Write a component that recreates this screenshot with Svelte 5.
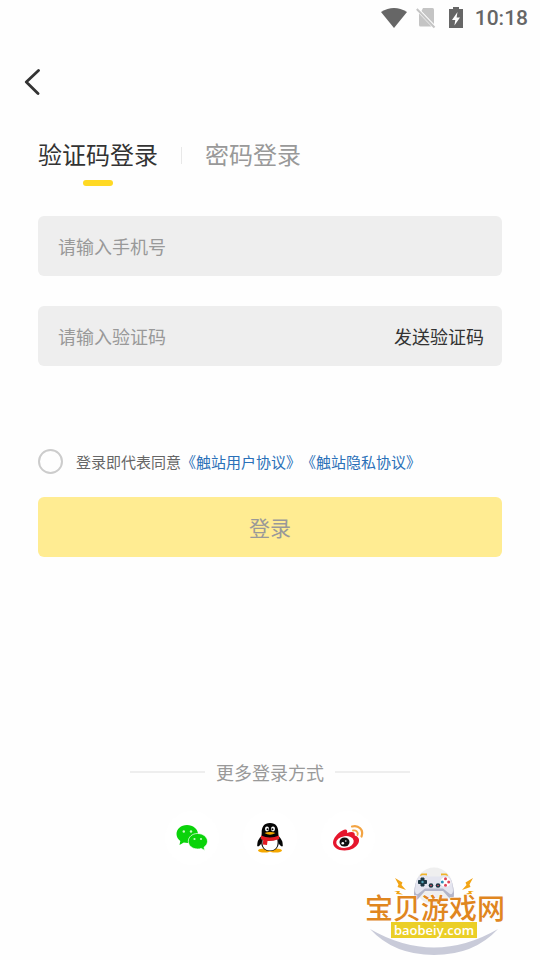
<script>
  let mode = $state('code');
  let phone = $state('');
  let secret = $state('');
  let agreed = $state(false);

  const tabs = [
    { id: 'code', label: '验证码登录' },
    { id: 'password', label: '密码登录' }
  ];

  const submit = (event) => {
    event.preventDefault();
  };
</script>

<div class="page">
  <header class="status">
    <svg width="26" height="22" viewBox="0 0 26 22" aria-hidden="true">
      <path d="M0 5Q13-3 26 5L13 21Z" fill="#666" />
    </svg>
    <svg width="20" height="22" viewBox="0 0 20 22" aria-hidden="true">
      <path d="M7 1H16.500Q18 1 18 2.500V17L5.500 4Z" fill="#c4c4c4" />
      <path d="M3 6.500L15.500 19.500H4.500Q3 19.500 3 18Z" fill="#c4c4c4" />
      <path d="M0.800 2L18.500 20.500" stroke="#c4c4c4" stroke-width="2" />
    </svg>
    <svg width="14" height="22" viewBox="0 0 14 22" aria-hidden="true">
      <path d="M4 0H10V2H14V21H0V2H4Z" fill="#666" />
      <path d="M8.500 5L3 13H6.300L5.400 18.500L11 10.500H7.600Z" fill="#fff" />
    </svg>
    <span class="time">10:18</span>
  </header>

  <nav class="topbar">
    <button class="back" type="button" aria-label="返回">
      <svg width="18" height="28" viewBox="0 0 18 28" aria-hidden="true">
        <path d="M14.500 3.500L2.300 15L14 26.500" fill="none" stroke="#333" stroke-width="2.800" stroke-linecap="round" stroke-linejoin="round" />
      </svg>
    </button>
  </nav>

  <main>
    <div class="tabs">
      {#each tabs as tab}
        <button
          type="button"
          class="tab"
          class:active={mode === tab.id}
          onclick={() => (mode = tab.id)}
        >
          {tab.label}
        </button>
      {/each}
    </div>

    <form onsubmit={submit}>
      <div class="field">
        <input type="tel" bind:value={phone} placeholder="请输入手机号" aria-label="手机号" />
      </div>
      <div class="field">
        {#if mode === 'code'}
          <input type="text" bind:value={secret} placeholder="请输入验证码" aria-label="验证码" />
          <button type="button" class="send">发送验证码</button>
        {:else}
          <input type="password" bind:value={secret} placeholder="请输入密码" aria-label="密码" />
        {/if}
      </div>

      <div class="agreement">
        <input id="agree" type="checkbox" bind:checked={agreed} />
        <p>
          <label for="agree">登录即代表同意</label><a href="#terms">《触站用户协议》</a><a href="#privacy">《触站隐私协议》</a>
        </p>
      </div>

      <button type="submit" class="login">登录</button>
    </form>
  </main>

  <section class="more">
    <h2>更多登录方式</h2>
    <div class="socials">
      <button type="button" aria-label="微信登录">
        <svg width="34" height="34" viewBox="0 0 34 34" aria-hidden="true">
          <path d="M12 4C5.800 4 1.500 8 1.500 13C1.500 16 3 18.300 5.300 20L4.500 24L8.800 21.600Q10.500 22 13 22C18.500 21.500 23 17.500 23 13C23 8 18 4 12 4Z" fill="#0ad30a" />
          <path d="M22.500 12.500C17.200 12.500 13.300 16 13.300 20.300C13.300 24.800 17.500 28 22.500 28Q24.500 28 26.200 27.400L29.800 29.500L29 26.200C31.200 24.800 32.500 22.800 32.500 20.300C32.500 16 28 12.500 22.500 12.500Z" fill="#0ad30a" stroke="#fff" stroke-width="0.700" />
          <g fill="#c9f7c4">
            <circle cx="8.800" cy="10.500" r="1.200" />
            <circle cx="16" cy="10.500" r="1.200" />
            <circle cx="19.500" cy="18" r="1.100" />
            <circle cx="26" cy="18" r="1.100" />
          </g>
        </svg>
      </button>
      <button type="button" aria-label="QQ登录">
        <svg width="34" height="34" viewBox="0 0 34 34" aria-hidden="true">
          <ellipse cx="11.500" cy="29.500" rx="6.500" ry="2" fill="#f5a800" />
          <ellipse cx="22.500" cy="29.500" rx="6.500" ry="2" fill="#f5a800" />
          <path d="M8.500 15Q4 19 4.200 25Q5.500 26.500 8 23Z" fill="#050505" />
          <path d="M25.500 15Q30 19 29.800 25Q28.500 26.500 26 23Z" fill="#050505" />
          <path d="M17 2C11 2 8.500 6 8.700 12L8 20C8 27 12 30 17 30S26 27 26 20L25.300 12C25.500 6 23 2 17 2Z" fill="#050505" />
          <path d="M9.800 18Q17 21 24.300 18Q26 29.300 17 29.500Q8 29.300 9.800 18Z" fill="#fff" />
          <ellipse cx="14" cy="8" rx="2" ry="2.400" fill="#fff" />
          <ellipse cx="20" cy="8" rx="2" ry="2.400" fill="#fff" />
          <circle cx="14.500" cy="8.200" r="1" fill="#050505" />
          <circle cx="19.500" cy="8.200" r="1" fill="#050505" />
          <path d="M11.500 12Q17 10 22.500 12Q17 15.500 11.500 12Z" fill="#f5a800" />
          <path d="M8 14.500Q17 18.500 26 14.500L26.300 18Q20 20.500 14.500 20L14 24L9.800 23.500L10.200 19L7.800 18Z" fill="#e31b23" />
        </svg>
      </button>
      <button type="button" aria-label="微博登录">
        <svg width="34" height="34" viewBox="0 0 34 34" aria-hidden="true">
          <path d="M11.500 9.500C15 7.500 17 9 16 12C20 10.300 24.500 10.300 23.800 14.500C27.500 15.500 29 18.500 27.500 22C25.500 26.500 20 29.500 13.500 29.500C6.500 29.500 2 26 2 21.500C2 17.500 6.500 12 11.500 9.500Z" fill="#e6162d" />
          <ellipse cx="14" cy="21" rx="8.800" ry="5.800" fill="#fff" transform="rotate(-8 14 21)" />
          <ellipse cx="13.500" cy="21" rx="5" ry="4.600" fill="#111" />
          <circle cx="11.800" cy="22.300" r="1.300" fill="#fff" />
          <circle cx="14.800" cy="20" r="0.800" fill="#fff" />
          <path d="M21 5.500C27.500 3.500 33 9 30.500 15.500" fill="none" stroke="#f3a443" stroke-width="2.200" stroke-linecap="round" />
          <path d="M22 9.500C25 8.800 27.500 11 26.500 14" fill="none" stroke="#f3a443" stroke-width="1.800" stroke-linecap="round" />
        </svg>
      </button>
    </div>
  </section>

  <footer>
    <svg width="145" height="95" viewBox="10 5 145 95" role="img" aria-label="宝贝游戏网 baobeiy.com">
      <circle cx="79" cy="26" r="18.500" fill="#efefef" />
      <path d="M15 69Q79 106 143 69Q119 95 79 95Q39 95 15 69Z" fill="#c9cbd9" />
      <path d="M65.500 16L67 14.500H72M86 14.500H91L92.500 16" fill="none" stroke="#f0b429" stroke-width="2" />
      <path d="M64 17Q69 14.500 73 17H85Q89 14.500 94 17Q98 21 99 33Q99 43 95 39L88 31H70L63 39Q59 43 59 33Q60 21 64 17Z" fill="#b3b5c9" />
      <path d="M64 16.500Q69 14 73 16.500H85Q89 14 94 16.500Q97.500 20 98 30Q98 35 95 34L88 28.500H70L63 34Q60 35 60 30Q60.500 20 64 16.500Z" fill="#e4e5ef" />
      <path d="M66 18H69V20.500H71.500V23.500H69V26H66V23.500H63.500V20.500H66Z" fill="#1d3844" stroke="#1d3844" stroke-width="1" stroke-linejoin="round" />
      <circle cx="67.500" cy="22" r="1.200" fill="#54a7bd" />
      <circle cx="76" cy="25.500" r="2.300" fill="#1d3844" />
      <circle cx="83" cy="25.500" r="2.300" fill="#1d3844" />
      <circle cx="76" cy="25.500" r="0.800" fill="#e0455a" />
      <circle cx="83" cy="25.500" r="0.800" fill="#e0455a" />
      <circle cx="90.500" cy="22" r="5" fill="#fff" />
      <circle cx="90.500" cy="18.800" r="1.500" fill="#e0455a" />
      <circle cx="90.500" cy="25.200" r="1.500" fill="#e0455a" />
      <circle cx="87.300" cy="22" r="1.500" fill="#2f8fb5" />
      <circle cx="93.700" cy="22" r="1.500" fill="#e0455a" />
      <g fill="#f2a516">
        <path d="M40 18L47.500 22.500L46.500 25L51 30L42.500 27L43.500 24.500Z" />
        <path d="M39 31L45 31L44 32.500L48 34.500L41 34L42 32Z" />
        <path d="M118 18L110.500 22.500L111.500 25L107 30L115.500 27L114.500 24.500Z" />
        <path d="M119 31L113 31L114 32.500L110 34.500L117 34L116 32Z" />
      </g>
      <text class="site" x="80" y="59">宝贝游戏网</text>
      <rect x="36" y="62" width="86" height="16" fill="#ebcf27" />
      <text class="domain" x="79" y="75">baobeiy.com</text>
    </svg>
  </footer>
</div>

<style>
  :global(body) {
    margin: 0;
    background: #fefefe;
  }

  .page {
    display: flex;
    flex-direction: column;
    min-height: 100vh;
    box-sizing: border-box;
    color: #333;
    font-family: "Noto Sans CJK SC", sans-serif;
    text-spacing-trim: space-all;
  }

  button,
  input {
    margin: 0;
    padding: 0;
    border: 0;
    background: none;
    color: inherit;
    font: inherit;
  }

  button {
    cursor: pointer;
  }

  svg {
    display: block;
  }

  .status {
    display: flex;
    align-items: center;
    justify-content: flex-end;
    height: 35px;
    padding-right: 12px;
  }

  .status svg:nth-child(2) {
    margin: 0 13px 0 9px;
  }

  .time {
    margin-left: 12px;
    color: #666;
    font: 500 21px/24px Roboto, sans-serif;
  }

  .topbar {
    padding: 32px 24px;
  }

  main {
    padding: 0 38px;
  }

  .tabs {
    display: flex;
    height: 54px;
    margin-bottom: 30px;
  }

  .tab {
    position: relative;
    height: 44px;
    color: #999;
    font-size: 24px;
    line-height: 44px;
  }

  .tab + .tab {
    margin-left: 23px;
    padding-left: 24px;
  }

  .tab + .tab::before {
    content: '';
    position: absolute;
    left: 0;
    top: 15px;
    width: 1px;
    height: 17px;
    background: #e8e8e8;
  }

  .tab.active {
    color: #333;
  }

  .tab.active::after {
    content: '';
    position: absolute;
    left: 50%;
    top: 48px;
    width: 30px;
    height: 6px;
    margin-left: -15px;
    border-radius: 3px;
    background: #ffd924;
  }

  .field {
    display: flex;
    align-items: center;
    height: 60px;
    margin-bottom: 30px;
    padding: 0 18px 0 20px;
    border-radius: 6px;
    background: #eee;
    font-size: 18px;
  }

  .field input {
    flex: 1;
    min-width: 0;
    height: 100%;
    outline: none;
  }

  .field input::placeholder {
    color: #999;
    opacity: 1;
  }

  .agreement {
    display: flex;
    align-items: center;
    gap: 13px;
    margin: 83px 0 23px;
    font-size: 15px;
    line-height: 25px;
  }

  .agreement input {
    flex: none;
    width: 25px;
    height: 25px;
    box-sizing: border-box;
    border: 2px solid #ccc;
    border-radius: 50%;
    appearance: none;
  }

  .agreement input:checked {
    border-color: #ffd924;
    background: #ffd924;
  }

  .agreement p {
    margin: 0;
    color: #666;
  }

  .agreement a {
    color: #2a70b8;
    text-decoration: none;
  }

  .login {
    width: 100%;
    height: 60px;
    border-radius: 6px;
    background: #ffec92;
    color: #999;
    font-size: 21px;
  }

  .more {
    display: flex;
    flex-direction: column;
    align-items: center;
    margin-top: auto;
  }

  h2 {
    display: flex;
    align-items: center;
    gap: 11px;
    margin: 0 0 26px;
    color: #999;
    font-size: 18px;
    font-weight: 400;
    line-height: 26px;
  }

  h2::before,
  h2::after {
    content: '';
    width: 75px;
    height: 2px;
    background: #eee;
  }

  .socials {
    display: flex;
    gap: 24px;
  }

  .socials button {
    display: grid;
    place-items: center;
    width: 54px;
    height: 54px;
    border-radius: 50%;
    background: #fff;
  }

  footer {
    display: flex;
    justify-content: flex-end;
    padding-right: 30px;
  }

  .site {
    fill: #e0861f;
    stroke: #fff;
    stroke-width: 1px;
    paint-order: stroke;
    font-size: 28px;
    font-weight: 500;
    text-anchor: middle;
  }

  .domain {
    fill: #fff;
    font: 600 13px "Open Sans", sans-serif;
    text-anchor: middle;
  }
</style>
